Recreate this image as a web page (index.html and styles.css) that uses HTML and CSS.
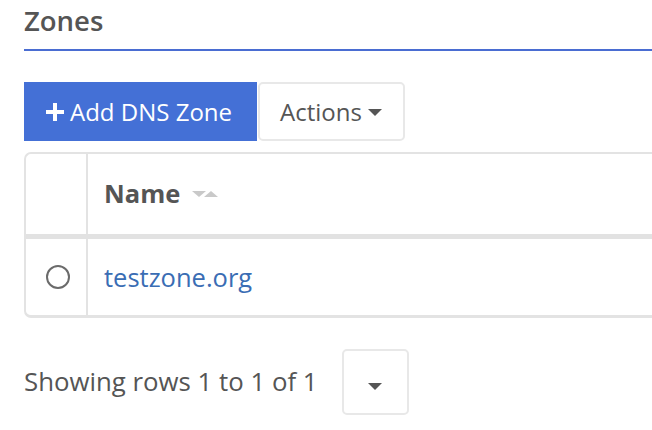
FILE: index.html
```html
<!DOCTYPE html>
<html>
<head>
<meta charset="utf-8">
<link rel="stylesheet" href="styles.css">
</head>
<body>
<div class="page">
  <h2 class="title">Zones</h2>
  <div class="toolbar">
    <button class="btn btn-primary"><svg class="plus" viewBox="0 0 18 18" width="18" height="18"><path d="M9 0v18M0 9h18" stroke="#fff" stroke-width="4"/></svg>Add DNS Zone</button>
    <button class="btn btn-default">Actions<span class="caret"></span></button>
  </div>
  <div class="table">
    <div class="row head">
      <div class="cell sel"></div>
      <div class="cell name">Name<span class="sort"><span class="down"></span><span class="up"></span></span></div>
    </div>
    <div class="row body">
      <div class="cell sel"><span class="radio"></span></div>
      <div class="cell name"><a class="link">testzone.org</a></div>
    </div>
  </div>
  <div class="footer">
    <span class="info">Showing rows 1 to 1 of 1</span>
    <button class="btn btn-default drop"><span class="caret"></span></button>
  </div>
</div>
</body>
</html>
```

FILE: styles.css
```css
html, body {
  margin: 0;
  padding: 0;
  overflow: hidden;
  background: #fff;
}
body {
  font-family: "Open Sans", "Noto Sans", sans-serif;
  color: #555;
}
.page {
  margin-left: 24px;
  width: 700px;
}
.title {
  margin: 0;
  padding-top: 2px;
  height: 47px;
  font-size: 27.5px;
  font-weight: 600;
  line-height: 38px;
  color: #555;
  border-bottom: 2px solid #4a6dd2;
}
.toolbar {
  display: flex;
  gap: 1px;
  margin-top: 31px;
}
.btn {
  font-family: inherit;
  font-size: 24px;
  height: 59px;
  display: flex;
  align-items: center;
  cursor: pointer;
}
.btn-primary {
  width: 233px;
  background: #4470d6;
  color: #fff;
  border: none;
  padding: 0 0 0 22px;
  border-radius: 0;
  white-space: nowrap;
}
.plus { margin-right: 6px; margin-top: 1px; }
.btn-default {
  background: #fff;
  color: #555;
  border: 2px solid #e8e8e8;
  border-radius: 5px;
  padding: 0 20px;
  width: 147px;
}
.caret {
  display: inline-block;
  width: 0;
  height: 0;
  border-left: 7px solid transparent;
  border-right: 7px solid transparent;
  border-top: 7px solid #555;
  margin-left: 6px;
  margin-top: 2px;
}
.table {
  margin-top: 11px;
  border: 2px solid #e3e3e3;
  border-right: none;
  border-radius: 7px 0 0 7px;
  border-bottom-width: 3px;
}
.row {
  display: flex;
}
.row.head {
  height: 80px;
  border-bottom: 5px solid #e2e2e2;
}
.row.body {
  height: 76px;
}
.cell {
  display: flex;
  align-items: center;
}
.cell.sel {
  width: 60px;
  border-right: 2px solid #e3e3e3;
  justify-content: center;
}
.cell.name {
  padding-left: 16px;
  font-size: 25.5px;
}
.head .cell.name {
  font-weight: 700;
  padding-bottom: 3px;
}
.sort {
  display: inline-flex;
  align-items: center;
  margin-left: 12px;
  margin-top: 2px;
}
.sort .down, .sort .up {
  width: 0;
  height: 0;
  border-left: 7px solid transparent;
  border-right: 7px solid transparent;
}
.sort .down { border-top: 6px solid #c9c9c9; }
.sort .up { border-bottom: 6px solid #c9c9c9; margin-left: -2px; }
.radio {
  width: 20px;
  height: 20px;
  border: 2px solid #6b6b6b;
  border-radius: 50%;
  margin-left: 3px;
}
.link {
  color: #3a6db4;
}
.footer {
  display: flex;
  align-items: center;
  margin-top: 31px;
}
.info {
  font-size: 25.8px;
  margin-right: 24px;
  margin-top: -3px;
}
.drop {
  width: 67px;
  height: 66px;
  padding: 0;
  justify-content: center;
}
.drop .caret { margin: 8px 0 0 0; }
```
